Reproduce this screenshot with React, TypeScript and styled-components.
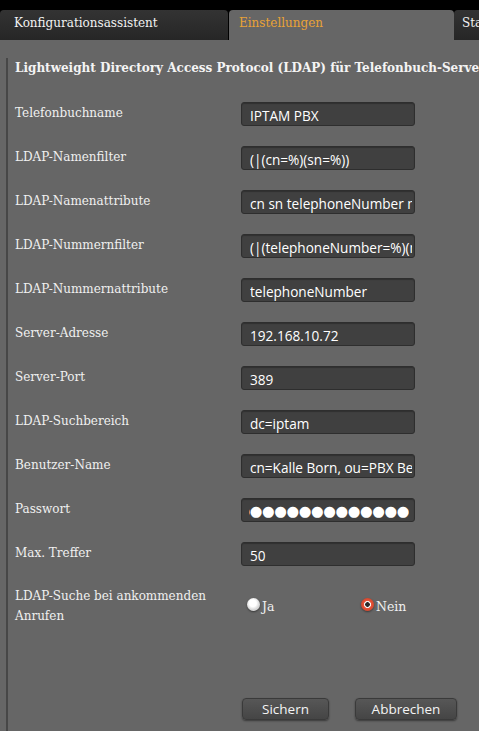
import React from "react";
import styled, { createGlobalStyle } from "styled-components";

const GlobalStyle = createGlobalStyle`
    html, body {
        margin: 0;
        padding: 0;
        background: #666666;
        font-family: "DejaVu Serif", "Liberation Serif", serif;
    }
`;

const fields = [
    { label: "Telefonbuchname", value: "IPTAM PBX" },
    { label: "LDAP-Namenfilter", value: "(|(cn=%)(sn=%))" },
    { label: "LDAP-Namenattribute", value: "cn sn telephoneNumber mobile" },
    { label: "LDAP-Nummernfilter", value: "(|(telephoneNumber=%)(mobile=%))" },
    { label: "LDAP-Nummernattribute", value: "telephoneNumber" },
    { label: "Server-Adresse", value: "192.168.10.72" },
    { label: "Server-Port", value: "389" },
    { label: "LDAP-Suchbereich", value: "dc=iptam" },
    { label: "Benutzer-Name", value: "cn=Kalle Born, ou=PBX Benutzer" },
    { label: "Passwort", value: "●●●●●●●●●●●●●●●●", secret: true },
    { label: "Max. Treffer", value: "50" },
];

const Page = styled.div`
    min-height: 100vh;
    background: #666666;
`;

const TopBand = styled.div`
    height: 10px;
    background: #000000;
`;

const TabBar = styled.div`
    display: flex;
    height: 30px;
    background: #000000;
    overflow: hidden;
`;

const Tab = styled.div<{ $active?: boolean; $width?: number; $pad: number }>`
    flex: ${p => (p.$width ? `0 0 ${p.$width}px` : "1 0 auto")};
    box-sizing: border-box;
    padding: 4px 0 0 ${p => p.$pad}px;
    font-size: 12px;
    line-height: 18px;
    white-space: nowrap;
    border-radius: 4px 4px 0 0;
    color: ${p => (p.$active ? "#e9a236" : "#f2f2f2")};
    background: ${p => (p.$active ? "#666666" : "linear-gradient(#333333, #262626)")};
    margin-left: ${p => (p.$active ? "1px" : "0")};
`;

const Content = styled.div`
    padding-top: 18px;
`;

const Panel = styled.div`
    margin-left: 6px;
    border-left: 2px solid #474747;
    padding-left: 7px;
    min-height: 673px;
    box-sizing: border-box;
`;

const Heading = styled.h1`
    margin: 0 0 14px;
    font-size: 12px;
    line-height: 20px;
    font-weight: bold;
    color: #f4f4f4;
    white-space: nowrap;
    overflow: hidden;
`;

const Form = styled.div`
    display: grid;
    grid-template-columns: 226px 174px;
    grid-auto-rows: 44px;
    align-items: center;
`;

const Label = styled.div`
    font-size: 12px;
    line-height: 20px;
    color: #f0f0f0;
    align-self: start;
    padding-top: 11px;
`;

const Field = styled.div<{ $end?: boolean }>`
    box-sizing: border-box;
    height: 24px;
    padding: ${p => (p.$end ? "1px 5px 0 7px" : "2px 2px 0 8px")};
    display: flex;
    align-items: center;
    background: #404040;
    border: 1px solid #2e2e2e;
    border-radius: 3px;
    box-shadow: inset 0 1px 1px rgba(0, 0, 0, 0.25);
    color: #ffffff;
    font-family: ${p => (p.$end ? '"DejaVu Sans", sans-serif' : '"Open Sans", "Noto Sans", sans-serif')};
    font-size: ${p => (p.$end ? "14.5px" : "13.6px")};
    letter-spacing: ${p => (p.$end ? "-0.4px" : "0")};
    white-space: nowrap;
    overflow: hidden;
`;

const FieldText = styled.span<{ $end?: boolean }>`
    flex: 1;
    display: flex;
    justify-content: ${p => (p.$end ? "flex-end" : "flex-start")};
    overflow: hidden;
`;

const RadioRow = styled.div`
    display: grid;
    grid-template-columns: 226px 114px 100px;
    height: 50px;
`;

const RadioLabel = styled(Label)`
    padding-top: 10px;
`;

const RadioOption = styled.label`
    display: flex;
    align-items: center;
    gap: 2px;
    padding: 11px 0 0 6px;
    font-size: 12.5px;
    color: #f0f0f0;
`;

const RadioDot = styled.span<{ $checked?: boolean }>`
    box-sizing: border-box;
    width: 13px;
    height: 13px;
    margin-top: -4px;
    border-radius: 50%;
    background: ${p =>
        p.$checked
            ? "radial-gradient(circle, #2a2a2a 0 2px, #f3f3f3 2.6px 3.2px, #e8553a 3.8px, #d0452c 6.5px)"
            : "radial-gradient(circle at 45% 40%, #ffffff 0 3.5px, #d6d6d6 6.5px)"};
    box-shadow: 0 1px 2px rgba(0, 0, 0, 0.45);
`;

const ButtonRow = styled.div`
    display: flex;
    gap: 26px;
    margin: 72px 0 0 227px;
`;

const Button = styled.button<{ $width: number }>`
    width: ${p => p.$width}px;
    height: 22px;
    padding: 0;
    border: 1px solid #3a3a3a;
    border-radius: 4px;
    background: linear-gradient(#575757, #454545);
    box-shadow: 0 1px 2px rgba(0, 0, 0, 0.45);
    color: #f4f4f4;
    font-family: "Open Sans", "Noto Sans", sans-serif;
    font-size: 13.5px;
    line-height: 20px;
    cursor: pointer;
`;

export default function App() {
    return (
        <>
            <GlobalStyle />
            <Page>
                <TopBand />
                <TabBar>
                    <Tab $width={228} $pad={14}>Konfigurationsassistent</Tab>
                    <Tab $active $width={225} $pad={10}>Einstellungen</Tab>
                    <Tab $pad={8}>Status</Tab>
                </TabBar>
                <Content>
                    <Panel>
                        <Heading>Lightweight Directory Access Protocol (LDAP) für Telefonbuch-Server</Heading>
                        <Form>
                            {fields.map(f => (
                                <React.Fragment key={f.label}>
                                    <Label>{f.label}</Label>
                                    <Field $end={f.secret}>
                                        <FieldText $end={f.secret}>
                                            <span>{f.value}</span>
                                        </FieldText>
                                    </Field>
                                </React.Fragment>
                            ))}
                        </Form>
                        <RadioRow>
                            <RadioLabel>
                                LDAP-Suche bei ankommenden
                                <br />
                                Anrufen
                            </RadioLabel>
                            <RadioOption>
                                <RadioDot />
                                Ja
                            </RadioOption>
                            <RadioOption>
                                <RadioDot $checked />
                                Nein
                            </RadioOption>
                        </RadioRow>
                        <ButtonRow>
                            <Button $width={87}>Sichern</Button>
                            <Button $width={102}>Abbrechen</Button>
                        </ButtonRow>
                    </Panel>
                </Content>
            </Page>
        </>
    );
}
